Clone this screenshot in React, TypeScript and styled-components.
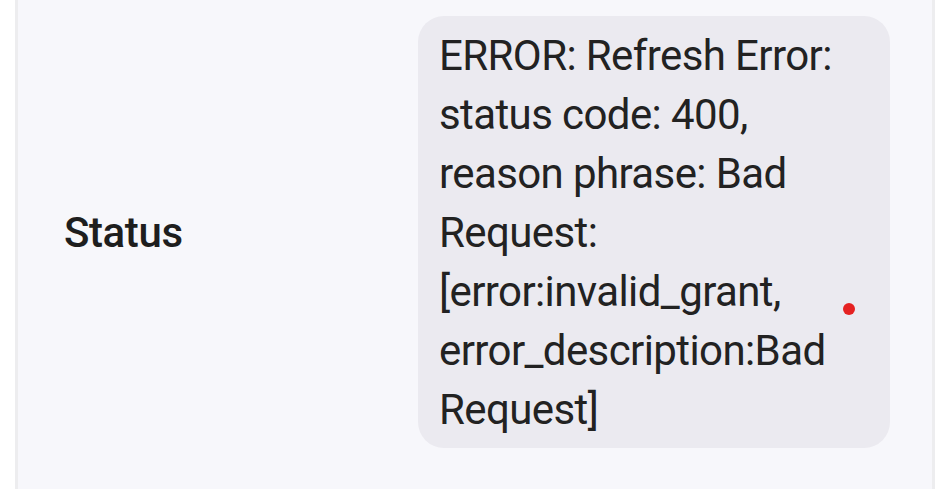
import React from "react";
import styled, { createGlobalStyle } from "styled-components";

const GlobalStyle = createGlobalStyle`
  html, body {
    margin: 0;
    padding: 0;
    background: #ffffff;
  }
  body {
    font-family: Roboto, "Noto Sans", "Liberation Sans", sans-serif;
    color: #202020;
  }
`;

const Panel = styled.div`
  box-sizing: border-box;
  margin: 0 10px 0 15px;
  width: 920px;
  min-height: 100vh;
  background: #f7f7fb;
  border-left: 3px solid #ededef;
  border-right: 3px solid #ededef;
  padding: 16px 0 0 46px;
`;

const Row = styled.div`
  display: grid;
  grid-template-columns: 354px 472px;
  align-items: center;
`;

const Label = styled.div`
  font-size: 42px;
  font-weight: 500;
  color: #1e1e1e;
  letter-spacing: -0.4px;
`;

const Bubble = styled.div`
  position: relative;
  box-sizing: border-box;
  background: #ebeaf0;
  border-radius: 26px;
  padding: 10px 21px 9px;
  font-size: 42px;
  line-height: 59px;
  color: #222222;
  letter-spacing: -0.6px;
  overflow-wrap: break-word;
`;

const Dot = styled.span<{ $color: string }>`
  position: absolute;
  top: 287px;
  right: 35px;
  width: 12px;
  height: 12px;
  border-radius: 50%;
  background: ${(p) => p.$color};
`;

const statusText =
  "ERROR: Refresh Error: status code: 400, reason phrase: Bad Request: [error:invalid_grant, error_description:Bad Request]";

export default function App() {
  return (
    <>
      <GlobalStyle />
      <Panel>
        <Row>
          <Label>Status</Label>
          <Bubble>
            {statusText}
            <Dot $color="#e52222" />
          </Bubble>
        </Row>
      </Panel>
    </>
  );
}
